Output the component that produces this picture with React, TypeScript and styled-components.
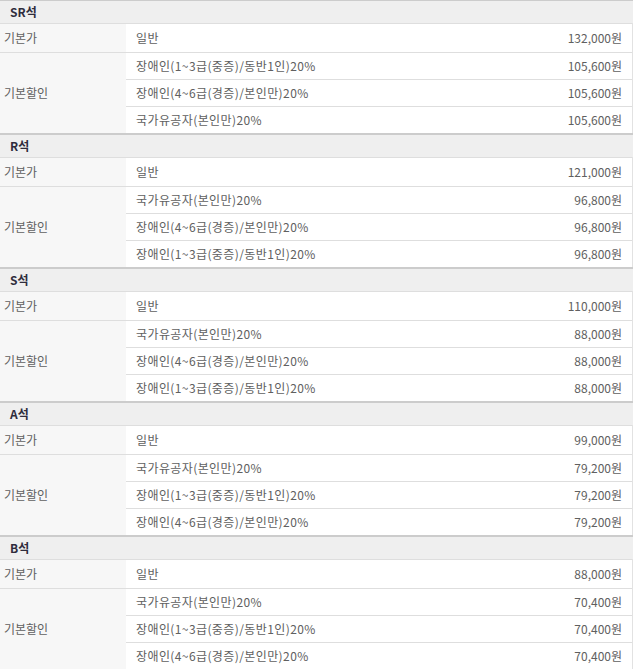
import React from 'react';
import styled, { createGlobalStyle } from 'styled-components';

const GlobalStyle = createGlobalStyle`
  body {
    margin: 0;
    background: #ffffff;
    font-family: "Noto Sans CJK KR", "Noto Sans", sans-serif;
    font-size: 12px;
    color: #606060;
  }
`;

type PriceRow = { name: string; price: string };
type Seat = { grade: string; base: string; discounts: PriceRow[] };

const seats: Seat[] = [
  {
    grade: 'SR석',
    base: '132,000원',
    discounts: [
      { name: '장애인(1~3급(중증)/동반1인)20%', price: '105,600원' },
      { name: '장애인(4~6급(경증)/본인만)20%', price: '105,600원' },
      { name: '국가유공자(본인만)20%', price: '105,600원' },
    ],
  },
  {
    grade: 'R석',
    base: '121,000원',
    discounts: [
      { name: '국가유공자(본인만)20%', price: '96,800원' },
      { name: '장애인(4~6급(경증)/본인만)20%', price: '96,800원' },
      { name: '장애인(1~3급(중증)/동반1인)20%', price: '96,800원' },
    ],
  },
  {
    grade: 'S석',
    base: '110,000원',
    discounts: [
      { name: '국가유공자(본인만)20%', price: '88,000원' },
      { name: '장애인(4~6급(경증)/본인만)20%', price: '88,000원' },
      { name: '장애인(1~3급(중증)/동반1인)20%', price: '88,000원' },
    ],
  },
  {
    grade: 'A석',
    base: '99,000원',
    discounts: [
      { name: '국가유공자(본인만)20%', price: '79,200원' },
      { name: '장애인(1~3급(중증)/동반1인)20%', price: '79,200원' },
      { name: '장애인(4~6급(경증)/본인만)20%', price: '79,200원' },
    ],
  },
  {
    grade: 'B석',
    base: '88,000원',
    discounts: [
      { name: '국가유공자(본인만)20%', price: '70,400원' },
      { name: '장애인(1~3급(중증)/동반1인)20%', price: '70,400원' },
      { name: '장애인(4~6급(경증)/본인만)20%', price: '70,400원' },
    ],
  },
];

const Wrapper = styled.div`
  width: 633px;
  margin-top: -1px;
`;

const Section = styled.section`
  border-top: 2px solid #cccccc;
`;

const GradeHeader = styled.div`
  height: 22px;
  line-height: 22px;
  padding-left: 10px;
  background: #efefef;
  color: #2f2d3d;
  font-weight: bold;
`;

const Grid = styled.div`
  display: grid;
  grid-template-columns: 126px 1fr auto;
  border-right: 1px solid #e2e2e2;
`;

const Cell = styled.div<{ $tall?: boolean }>`
  border-top: 1px solid #dedede;
  height: ${(p) => (p.$tall ? 28 : 26)}px;
  line-height: ${(p) => (p.$tall ? 28 : 26)}px;
  white-space: nowrap;
`;

const Label = styled(Cell)<{ $span?: number }>`
  background: #f7f7f7;
  padding-left: 4px;
  ${(p) =>
    p.$span
      ? `grid-row: span ${p.$span}; height: auto; display: flex; align-items: center; line-height: 1;`
      : ''}
`;

const Name = styled(Cell)`
  padding-left: 10px;
  letter-spacing: 0.4px;
`;

const Price = styled(Cell)`
  padding-right: 10px;
  text-align: right;
`;

const App: React.FC = () => {
  return (
    <Wrapper>
      <GlobalStyle />
      {seats.map((seat) => (
        <Section key={seat.grade}>
          <GradeHeader>{seat.grade}</GradeHeader>
          <Grid>
            <Label $tall>기본가</Label>
            <Name $tall>일반</Name>
            <Price $tall>{seat.base}</Price>
            <Label $span={seat.discounts.length}>기본할인</Label>
            {seat.discounts.map((d, i) => (
              <React.Fragment key={i}>
                <Name>{d.name}</Name>
                <Price>{d.price}</Price>
              </React.Fragment>
            ))}
          </Grid>
        </Section>
      ))}
    </Wrapper>
  );
};

export default App;
